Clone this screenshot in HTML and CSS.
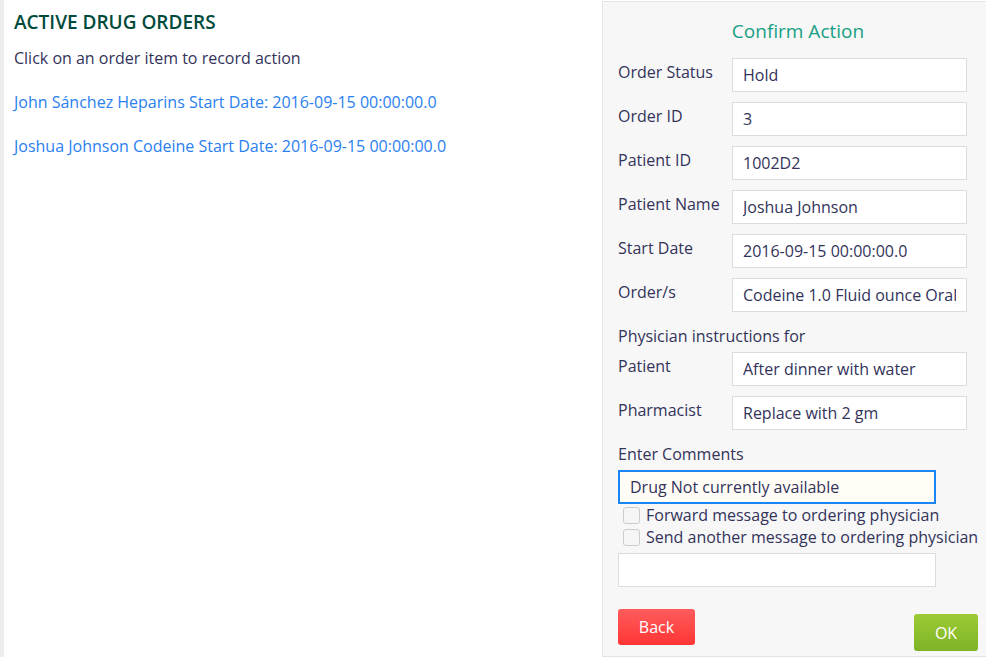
FILE: index.html
```html
<!DOCTYPE html>
<html lang="en">
<head>
    <meta charset="UTF-8">
    <meta name="viewport" content="width=device-width, initial-scale=1.0">
    <title>Active Drug Orders</title>
    <link rel="stylesheet" href="styles.css">
</head>
<body>

<div class="page">

    <!-- Order list -->
    <div class="orders">
        <h2>ACTIVE DRUG ORDERS</h2>
        <p class="hint">Click on an order item to record action</p>
        <a href="#" class="order-link">John Sánchez Heparins Start Date: 2016-09-15 00:00:00.0</a>
        <a href="#" class="order-link">Joshua Johnson Codeine Start Date: 2016-09-15 00:00:00.0</a>
    </div>

    <!-- Confirm panel -->
    <div class="panel">
        <h3>Confirm Action</h3>

        <div class="row">
            <label>Order Status</label>
            <input type="text" value="Hold">
        </div>
        <div class="row">
            <label>Order ID</label>
            <input type="text" value="3">
        </div>
        <div class="row">
            <label>Patient ID</label>
            <input type="text" value="1002D2">
        </div>
        <div class="row">
            <label>Patient Name</label>
            <input type="text" value="Joshua Johnson">
        </div>
        <div class="row">
            <label>Start Date</label>
            <input type="text" value="2016-09-15 00:00:00.0">
        </div>
        <div class="row">
            <label>Order/s</label>
            <input type="text" value="Codeine 1.0 Fluid ounce Oral">
        </div>

        <div class="sub-title">Physician instructions for</div>
        <div class="row">
            <label>Patient</label>
            <input type="text" value="After dinner with water">
        </div>
        <div class="row">
            <label>Pharmacist</label>
            <input type="text" value="Replace with 2 gm">
        </div>

        <div class="sub-title comments">Enter Comments</div>
        <input type="text" class="comment focused" value="Drug Not currently available">

        <label class="check"><span class="box"></span>Forward message to ordering physician</label>
        <label class="check"><span class="box"></span>Send another message to ordering physician</label>

        <input type="text" class="comment extra">

        <div class="actions">
            <button class="btn-back">Back</button>
            <button class="btn-ok">OK</button>
        </div>
    </div>

</div>

</body>
</html>
```

FILE: styles.css
```css
body {
    font-family: "Open Sans", Arial, sans-serif;
    font-size: 16px;
    margin: 0;
    padding: 0;
    background-color: #fff;
    color: #33335a;
}

.page {
    display: flex;
    height: 657px;
    border-left: 4px solid #ededed;
}

/* Order list */
.orders {
    flex: 1;
    padding: 8px 10px 0 10px;
}

.orders h2 {
    margin: 0;
    font-size: 19px;
    font-weight: 600;
    color: #004a3c;
    line-height: 28px;
}

.hint {
    margin: 12px 0 0 0;
    line-height: 20px;
}

.order-link {
    display: block;
    color: #2a80f0;
    text-decoration: none;
    line-height: 20px;
    margin-top: 24px;
}

/* Confirm panel */
.panel {
    width: 368px;
    margin-top: 1px;
    background-color: #f7f7f7;
    border-top: 1px solid #e4e4e4;
    border-left: 1px solid #e4e4e4;
    border-bottom: 1px solid #e4e4e4;
    padding: 0 0 0 15px;
    display: flex;
    flex-direction: column;
    align-items: flex-start;
}

.panel h3 {
    margin: 15px 0 0 0;
    width: 360px;
    text-align: center;
    font-size: 19px;
    font-weight: 400;
    color: #17a085;
    line-height: 28px;
}

.row {
    display: flex;
    margin-top: 13px;
}

.row + .row {
    margin-top: 10px;
}

.row label {
    width: 114px;
    line-height: 28px;
}

input[type="text"] {
    font-family: "Open Sans", Arial, sans-serif;
    font-size: 16px;
    color: #33335a;
    width: 235px;
    height: 34px;
    box-sizing: border-box;
    padding: 0 10px;
    border: 1px solid #dcdcdc;
    background-color: #fff;
    outline: none;
}

.sub-title {
    margin-top: 14px;
    line-height: 20px;
}

.sub-title + .row {
    margin-top: 6px;
}

.sub-title.comments {
    margin-top: 14px;
}

input.comment {
    width: 318px;
    margin-top: 6px;
}

input.focused {
    border: 2px solid #1a86f5;
    background-color: #fffdf6;
}

input.extra {
    margin-top: 5px;
}

.check {
    display: flex;
    align-items: center;
    margin-left: 5px;
    line-height: 22px;
}

.check .box {
    width: 17px;
    height: 17px;
    box-sizing: border-box;
    border: 1px solid #cccccc;
    border-radius: 3px;
    background-color: #f5f5f5;
    margin-right: 6px;
}

.actions {
    display: flex;
    justify-content: space-between;
    align-items: flex-start;
    width: 360px;
    margin-top: 22px;
}

button {
    font-family: "Open Sans", Arial, sans-serif;
    font-size: 16px;
    color: #fff;
    border: none;
    border-radius: 3px;
    cursor: pointer;
}

.btn-back {
    width: 77px;
    height: 36px;
    background: linear-gradient(#ff5c5c, #ff3535);
}

.btn-ok {
    width: 64px;
    height: 37px;
    margin-top: 5px;
    background: linear-gradient(#9ccb34, #7fb327);
}
```
